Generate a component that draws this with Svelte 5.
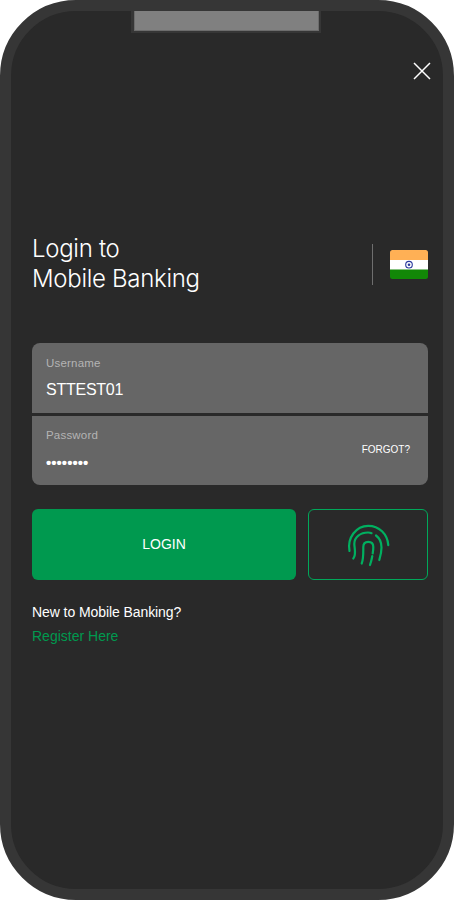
<script lang="ts">
  let username = "STTEST01";
  let dots = "••••••••";
</script>

<div class="phone">
  <div class="notch"><div class="speaker"></div></div>

  <div class="top">
    <button class="close" aria-label="Close">
      <svg width="18" height="18" viewBox="0 0 18 18" fill="none" stroke="#fff" stroke-width="1.5">
        <path d="M1 1L17 17M17 1L1 17" />
      </svg>
    </button>
  </div>

  <main class="content">
    <div class="heading">
      <h1>Login to<br />Mobile Banking</h1>
      <div class="locale">
        <span class="divider"></span>
        <svg class="flag" width="38" height="29" viewBox="0 0 38 29">
          <defs>
            <clipPath id="flag-clip"><rect width="38" height="29" rx="2.5" /></clipPath>
          </defs>
          <g clip-path="url(#flag-clip)">
            <rect width="38" height="10" fill="#ffb055" />
            <rect y="10" width="38" height="10" fill="#fff" />
            <rect y="19.5" width="38" height="9.5" fill="#128807" />
          </g>
          <circle cx="19" cy="14.7" r="3.3" fill="#fff" stroke="#2a3a9e" stroke-width="1.1" />
          <circle cx="19" cy="14.7" r="1.3" fill="#2a3a9e" />
        </svg>
      </div>
    </div>

    <div class="fields">
      <div class="field username">
        <span class="label">Username</span>
        <span class="value">{username}</span>
      </div>
      <div class="field password">
        <span class="label">Password</span>
        <span class="dots">{dots}</span>
        <span class="forgot">FORGOT?</span>
      </div>
    </div>

    <div class="actions">
      <button class="login">LOGIN</button>
      <button class="bio" aria-label="Fingerprint login">
        <svg width="46" height="46" viewBox="0 0 46 46" fill="none" stroke="#00b060" stroke-width="2.2" stroke-linecap="round">
          <path d="M4.5 29C2 16 11 3.8 23.3 3.8C34 3.8 42.5 12 43.3 23.2" />
          <path d="M8.3 36.5C11.5 33 9.5 27 9.3 22C9.3 15 15.5 10.5 23 10.5C24.5 10.5 25.7 10.8 26.5 11.2" />
          <path d="M31 13.5C35 16.5 36.5 21 36.5 25.5C36.5 30 35.5 34 34.3 38" />
          <path d="M16.7 41.5C18.5 37 18.3 31 18.3 25C18.3 22 20 19.8 23.3 19.8C26.5 19.8 28.3 22 28.3 25C28.3 27.5 28 29.5 27.7 31.5" />
          <path d="M27.3 34C26.8 37 26 40 25 43" />
        </svg>
      </button>
    </div>

    <p class="new">New to Mobile Banking?</p>
    <a class="register" href="#register">Register Here</a>
  </main>
</div>

<style>
  :global(body) {
    margin: 0;
    background: #fff;
  }

  .phone {
    position: relative;
    box-sizing: border-box;
    width: 454px;
    height: 900px;
    background: #292929;
    border: 11px solid #363636;
    border-radius: 76px;
    font-family: "Liberation Sans", Arial, sans-serif;
    color: #fff;
    overflow: hidden;
  }

  .notch {
    position: absolute;
    top: -11px;
    left: 120px;
    width: 190px;
    height: 33px;
    box-sizing: border-box;
    padding: 7px 2px 2px 3px;
    background: #363636;
  }

  .speaker {
    height: 100%;
    background: #808080;
    border: 1px solid #6c6c6c;
    box-sizing: border-box;
  }

  .top {
    display: flex;
    justify-content: flex-end;
    padding: 51px 12px 0 0;
  }

  .close {
    padding: 0;
    background: none;
    border: 0;
    height: 18px;
  }

  .close svg {
    display: block;
  }

  .content {
    padding: 0 15px 0 21px;
  }

  .heading {
    display: flex;
    align-items: center;
    justify-content: space-between;
    margin-top: 154px;
  }

  h1 {
    margin: 0;
    font-family: Inter, "Liberation Sans", sans-serif;
    font-size: 24px;
    font-weight: 300;
    line-height: 30px;
    letter-spacing: -0.3px;
  }

  .locale {
    display: flex;
    align-items: center;
    gap: 17px;
  }

  .divider {
    width: 1px;
    height: 41px;
    background: #6e6e6e;
  }

  .flag {
    display: block;
  }

  .fields {
    display: flex;
    flex-direction: column;
    gap: 3px;
    margin-top: 49px;
  }

  .field {
    position: relative;
    box-sizing: border-box;
    display: flex;
    flex-direction: column;
    padding: 13px 14px 0;
    background: #666;
  }

  .username {
    height: 70px;
    border-radius: 8px 8px 0 0;
  }

  .password {
    height: 69px;
    padding-top: 12px;
    border-radius: 0 0 8px 8px;
  }

  .label {
    font-size: 11.5px;
    line-height: 14px;
    color: #b4b4b4;
    letter-spacing: 0.2px;
  }

  .value {
    margin-top: 10px;
    font-size: 16px;
    line-height: 20px;
    letter-spacing: -0.25px;
  }

  .dots {
    margin-top: 11px;
    font-size: 15px;
    font-weight: bold;
    line-height: 20px;
    letter-spacing: 0.03px;
  }

  .forgot {
    position: absolute;
    right: 18px;
    top: 27px;
    font-size: 10px;
    line-height: 13px;
  }

  .actions {
    display: flex;
    gap: 12px;
    margin-top: 24px;
  }

  .actions button {
    height: 71px;
    border-radius: 6px;
    padding: 0;
    font-family: inherit;
  }

  .actions .login {
    width: 264px;
    padding-bottom: 1px;
    background: #00994f;
    border: 0;
    color: #fff;
    font-size: 14px;
  }

  .bio {
    display: flex;
    align-items: center;
    justify-content: center;
    width: 120px;
    background: none;
    border: 1.5px solid #00a85a;
  }

  .new {
    margin: 24px 0 0;
    font-size: 14px;
    line-height: 17px;
    letter-spacing: -0.08px;
  }

  .register {
    display: block;
    margin-top: 7px;
    font-size: 14px;
    line-height: 17px;
    color: #00994f;
    text-decoration: none;
  }
</style>
